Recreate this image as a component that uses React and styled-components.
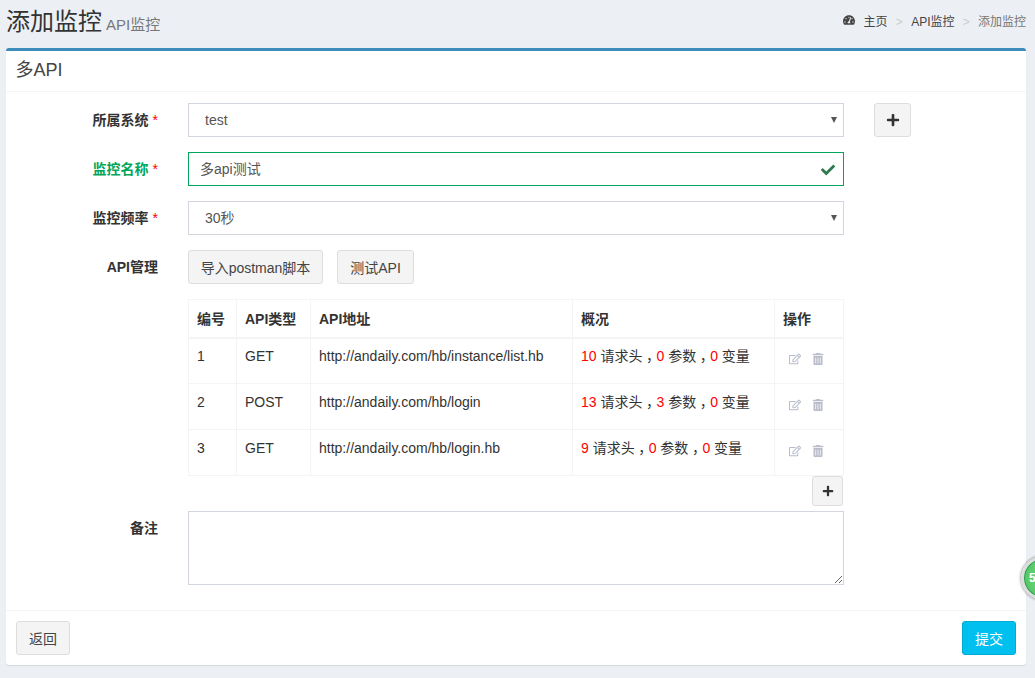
import styled, { createGlobalStyle } from "styled-components"
import { FaCheck, FaPlus, FaRegEdit, FaTachometerAlt, FaTrashAlt } from "react-icons/fa"

const FONT = `"Liberation Sans", "Noto Sans CJK SC", sans-serif`

const GlobalStyle = createGlobalStyle`
html, body {
    margin: 0;
    padding: 0;
    height: 100%;
    overflow: hidden;
    background: #ecf0f5;
    font-family: ${FONT};
    font-size: 14px;
    color: #333;
}
* { box-sizing: border-box; }
`

const Page = styled.div`
position: relative;
width: 1035px;
height: 678px;
padding: 0 9px 0 6px;
overflow: hidden;
`

const TopBar = styled.div`
display: flex;
align-items: center;
justify-content: space-between;
height: 48px;
padding-bottom: 2px;
`

const Title = styled.h1`
margin: 0;
font-size: 24px;
font-weight: 400;
line-height: 44px;
color: #333;

small {
    margin-left: 4px;
    font-size: 15px;
    color: #777;
}
`

const Crumbs = styled.ol`
display: flex;
align-items: center;
margin: 0;
padding: 0 0 6px;
list-style: none;
font-size: 12px;
color: #444;

svg {
    margin-right: 9px;
    font-size: 12px;
}

li + li::before {
    content: ">";
    padding: 0 8.25px;
    color: #ccc;
}

li:last-child { color: #777; }
`

const Card = styled.div`
height: 617px;
background: #fff;
border-top: 3px solid #3c8dbc;
border-radius: 3px;
box-shadow: 0 1px 1px rgba(0, 0, 0, 0.1);
display: flex;
flex-direction: column;
`

const CardHeader = styled.div`
height: 41px;
padding: 0 9.5px;
border-bottom: 1px solid #f4f4f4;
font-size: 18px;
line-height: 39px;
color: #444;
`

const CardBody = styled.div`
flex: 1;
padding-top: 11px;
`

const Row = styled.div`
display: grid;
grid-template-columns: 152px 656px auto;
column-gap: 30px;
margin-bottom: ${(p) => p.$gap ?? 15}px;
`

const Label = styled.label`
padding-top: 7px;
text-align: right;
font-size: 14px;
font-weight: 700;
line-height: 21px;
color: ${(p) => (p.$ok ? "#00a65a" : "#333")};

i {
    margin-left: 4px;
    font-style: normal;
    font-weight: 400;
    color: #f00;
}
`

const Field = styled.div`
position: relative;
height: 34px;
padding: 0 16px;
border: 1px solid #d2d6de;
font-size: 14px;
line-height: ${(p) => (p.$cjk ? 33 : 32)}px;
color: #555;
`

const Arrow = styled.span`
position: absolute;
right: 6px;
top: 13px;
width: 0;
height: 0;
border-left: 3px solid transparent;
border-right: 3px solid transparent;
border-top: 6px solid #555;
`

const ValidField = styled(Field)`
padding: 0 11px;
border-color: #00a65a;

svg {
    position: absolute;
    right: 8px;
    top: 10px;
    font-size: 14px;
    color: #2f7a4f;
}
`

const Button = styled.button`
width: ${(p) => (p.$width ? `${p.$width}px` : "auto")};
height: 34px;
padding: 0;
border: 1px solid #ddd;
border-radius: 3px;
background: #f4f4f4;
font-family: ${FONT};
font-size: 14px;
color: #444;
`

const IconButton = styled(Button)`
display: flex;
align-items: center;
justify-content: center;
height: ${(p) => (p.$width === 37 ? 34 : 30)}px;
color: #333;

svg { font-size: ${(p) => (p.$width === 37 ? 14 : 12)}px; }
`

const ButtonGroup = styled.div`
display: flex;
gap: 14px;
`

const Table = styled.table`
width: 655px;
table-layout: fixed;
border-collapse: collapse;
font-size: 14px;

th, td {
    border: 1px solid #f4f4f4;
    padding: 8px;
    text-align: left;
    vertical-align: top;
    line-height: 20px;
}

th {
    height: 38px;
    padding: 9px 8px 7px;
    border-bottom-width: 2px;
    font-size: 14px;
    font-weight: 700;
}

td { height: 46px; }

tbody tr:first-child td { padding-top: 7px; }

td b {
    font-weight: 400;
    color: #f00;
}
`

const Comma = styled.span`
font-feature-settings: "halt";
padding: 0 3.5px;
`

const ActionCell = styled.td`
svg {
    margin: 7px 5px 0 6px;
    font-size: 12px;
    color: #b8bccb;
}
`

const AddRow = styled.div`
display: flex;
justify-content: flex-end;
height: 35px;
padding-right: 1px;
`

const Notes = styled.textarea`
display: block;
width: 656px;
height: 74px;
border: 1px solid #d2d6de;
background: #fff;
`

const CardFooter = styled.div`
display: flex;
justify-content: space-between;
height: 55px;
padding: 10px;
border-top: 1px solid #f4f4f4;
`

const SubmitButton = styled(Button)`
border-color: #00acd6;
background: #00c0ef;
color: #fff;
`

const Ball = styled.div`
position: absolute;
left: 1021px;
top: 556px;
width: 44px;
height: 44px;
padding-left: 5px;
border: 3px solid #ddd;
border-radius: 50%;
background: radial-gradient(circle at 60% 50%, #7ddc7d, #46c060);
box-shadow: 0 0 3px rgba(0, 0, 0, 0.6), inset 0 0 0 1px #2a9a50;
font-size: 12px;
font-weight: 700;
line-height: 38px;
color: #fff;
`

const apis = [
    { id: 1, type: "GET", url: "http://andaily.com/hb/instance/list.hb", headers: 10, params: 0, vars: 0 },
    { id: 2, type: "POST", url: "http://andaily.com/hb/login", headers: 13, params: 3, vars: 0 },
    { id: 3, type: "GET", url: "http://andaily.com/hb/login.hb", headers: 9, params: 0, vars: 0 },
]

const App = () => {
    return (
        <Page>
            <GlobalStyle />
            <TopBar>
                <Title>添加监控<small>API监控</small></Title>
                <Crumbs>
                    <li><FaTachometerAlt />主页</li>
                    <li>API监控</li>
                    <li>添加监控</li>
                </Crumbs>
            </TopBar>
            <Card>
                <CardHeader>多API</CardHeader>
                <CardBody>
                    <Row>
                        <Label>所属系统<i>*</i></Label>
                        <Field>test<Arrow /></Field>
                        <IconButton $width={37}><FaPlus /></IconButton>
                    </Row>
                    <Row>
                        <Label $ok>监控名称<i>*</i></Label>
                        <ValidField $cjk>多api测试<FaCheck /></ValidField>
                    </Row>
                    <Row>
                        <Label>监控频率<i>*</i></Label>
                        <Field $cjk>30秒<Arrow /></Field>
                    </Row>
                    <Row>
                        <Label>API管理</Label>
                        <ButtonGroup>
                            <Button $width={135}>导入postman脚本</Button>
                            <Button $width={77}>测试API</Button>
                        </ButtonGroup>
                    </Row>
                    <Row $gap={0}>
                        <span />
                        <div>
                            <Table>
                                <colgroup>
                                    <col style={{ width: 48 }} />
                                    <col style={{ width: 74 }} />
                                    <col style={{ width: 262 }} />
                                    <col style={{ width: 202 }} />
                                    <col style={{ width: 69 }} />
                                </colgroup>
                                <thead>
                                    <tr>
                                        <th>编号</th>
                                        <th>API类型</th>
                                        <th>API地址</th>
                                        <th>概况</th>
                                        <th>操作</th>
                                    </tr>
                                </thead>
                                <tbody>
                                    {apis.map((api) => (
                                        <tr key={api.id}>
                                            <td>{api.id}</td>
                                            <td>{api.type}</td>
                                            <td>{api.url}</td>
                                            <td>
                                                <b>{api.headers}</b> 请求头<Comma>，</Comma><b>{api.params}</b> 参数<Comma>，</Comma><b>{api.vars}</b> 变量
                                            </td>
                                            <ActionCell><FaRegEdit /><FaTrashAlt /></ActionCell>
                                        </tr>
                                    ))}
                                </tbody>
                            </Table>
                            <AddRow>
                                <IconButton $width={31}><FaPlus /></IconButton>
                            </AddRow>
                        </div>
                    </Row>
                    <Row $gap={0}>
                        <Label>备注</Label>
                        <Notes />
                    </Row>
                </CardBody>
                <CardFooter>
                    <Button $width={54}>返回</Button>
                    <SubmitButton $width={54}>提交</SubmitButton>
                </CardFooter>
            </Card>
            <Ball>5</Ball>
        </Page>
    )
}

export default App
